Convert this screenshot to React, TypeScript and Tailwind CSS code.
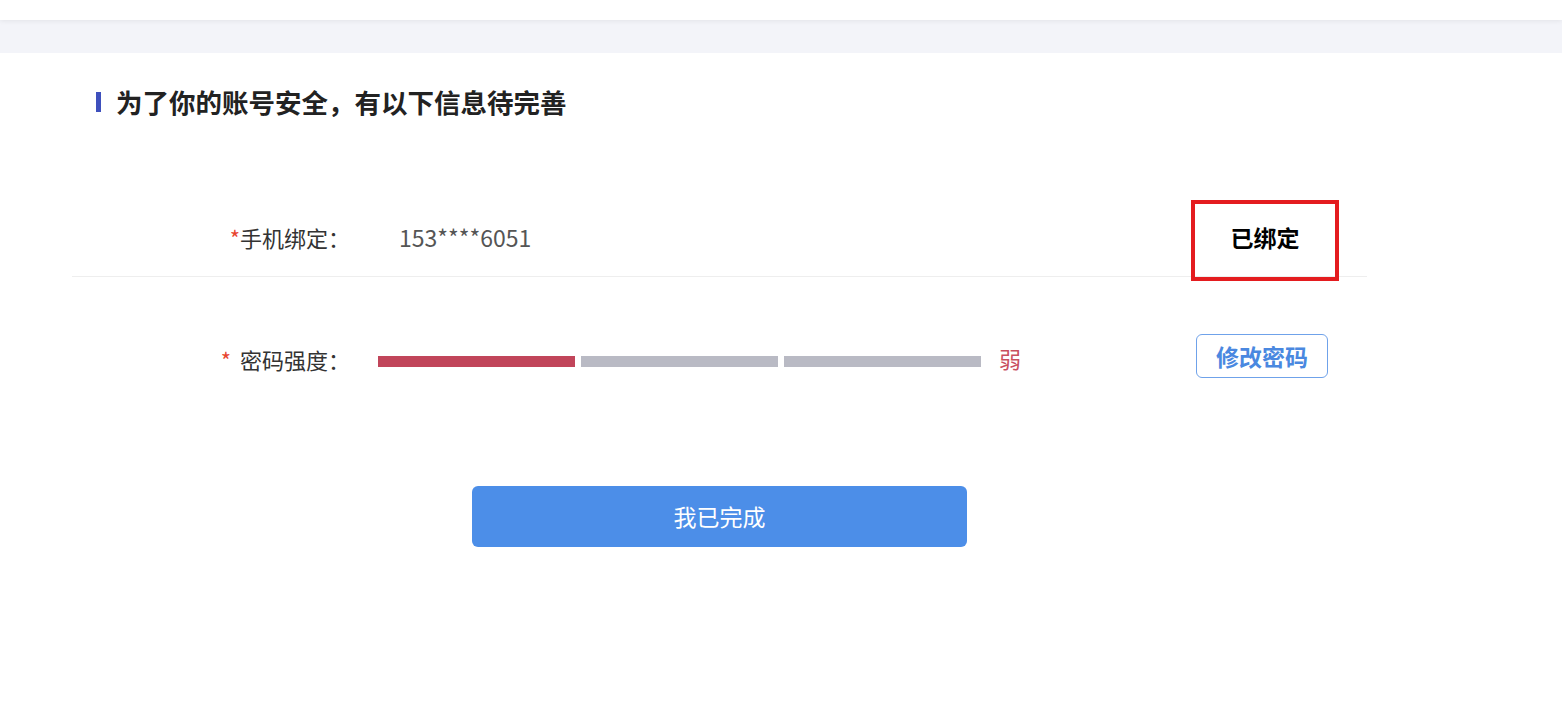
import React from 'react';

const FONT = '"Noto Sans CJK SC", "Noto Sans", sans-serif';

function StrengthBars({ level }: { level: number }) {
  const segments = [0, 1, 2];
  return (
    <div className="flex items-center gap-[6px]">
      {segments.map((i) => (
        <div
          key={i}
          className={
            i < level
              ? 'h-[11px] w-[197px] bg-[#c1455a]'
              : 'h-[11px] w-[197px] bg-[#b9bac4]'
          }
        />
      ))}
    </div>
  );
}

export default function App() {
  return (
    <div className="min-h-screen bg-white" style={{ fontFamily: FONT }}>
      {/* top bar */}
      <div className="relative z-10 h-[20px] bg-white shadow-[0_1px_5px_rgba(0,0,0,0.07)]" />
      <div className="h-[33px] bg-[#f3f4f9]" />

      {/* title */}
      <div className="mt-[34px] flex items-center pl-[96px]">
        <span className="h-[20px] w-[5px] bg-[#3e50bd]" />
        <h1 className="ml-[15px] text-[26.5px] font-bold leading-[30px] text-[#222]">
          为了你的账号安全，有以下信息待完善
        </h1>
      </div>

      <div className="ml-[72px] w-[1295px]">
        {/* phone row */}
        <div className="mt-[85px] flex h-[75px] items-center border-b border-[#eeeeee] pb-[5px]">
          <div className="w-[278px] text-right text-[22px] leading-[30px] text-[#333]">
            <span className="text-[#e8452f]">*</span>手机绑定：
          </div>
          <div className="ml-[49px] flex-1 text-[23px] leading-[30px] text-[#555]">153****6051</div>
          <div className="mr-[39px] flex w-[132px] justify-center pl-[6px]">
            <span className="relative text-[23px] font-bold leading-[30px] text-black">
              已绑定
              <span className="absolute left-1/2 top-1/2 h-[81px] w-[148px] -translate-x-1/2 -translate-y-[37px] border-4 border-[#e41c1f]" />
            </span>
          </div>
        </div>

        {/* password row */}
        <div className="mt-[44px] flex h-[76px] items-center">
          <div className="w-[278px] text-right text-[22px] leading-[30px] text-[#333]">
            <span className="mr-[4px] text-[#e8452f]">*</span> 密码强度：
          </div>
          <div className="mt-[4px] ml-[28px] flex flex-1 items-center">
            <StrengthBars level={1} />
            <span className="ml-[18px] mt-[-6px] text-[22px] leading-[30px] text-[#c9505f]">弱</span>
          </div>
          <button className="mr-[39px] -mt-[6px] h-[44px] w-[132px] rounded-[6px] border border-[#6fa2ea] text-[23px] font-bold leading-[30px] text-[#4a88e0]">
            修改密码
          </button>
        </div>

        {/* done */}
        <div className="mt-[89px] flex justify-center">
          <button className="h-[61px] w-[495px] rounded-[6px] bg-[#4c8ee8] text-[23px] text-white">
            我已完成
          </button>
        </div>
      </div>
    </div>
  );
}
